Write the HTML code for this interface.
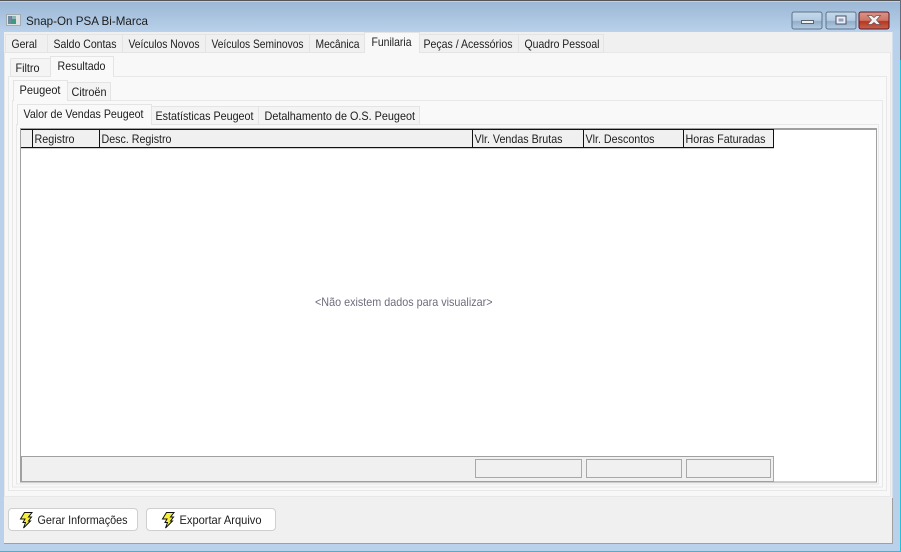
<!DOCTYPE html>
<html><head><meta charset="utf-8"><title>Snap-On PSA Bi-Marca</title>
<style>
html,body{margin:0;padding:0;background:#b9d1ea;overflow:hidden}
svg{display:block}
text{font-family:"Liberation Sans",sans-serif;font-size:12px;fill:#1c1c1c}
</style></head><body>
<svg width="901" height="552" viewBox="0 0 901 552" xmlns="http://www.w3.org/2000/svg">
<defs>
<linearGradient id="f" x1="0" y1="0" x2="0" y2="1"><stop offset="0" stop-color="#9ab6d4"/><stop offset="1" stop-color="#b9d1ea"/></linearGradient>
<linearGradient id="b" x1="0" y1="0" x2="0" y2="1"><stop offset="0" stop-color="#c6d9ec"/><stop offset=".5" stop-color="#b4cbe2"/><stop offset=".55" stop-color="#93adc8"/><stop offset="1" stop-color="#b4cde6"/></linearGradient>
<linearGradient id="c" x1="0" y1="0" x2="0" y2="1"><stop offset="0" stop-color="#d9968a"/><stop offset=".5" stop-color="#cf7463"/><stop offset=".55" stop-color="#b8351d"/><stop offset="1" stop-color="#c9634f"/></linearGradient>
</defs>
<rect width="901" height="552" fill="#b9d1ea"/>
<rect width="901" height="32" fill="url(#f)"/>
<rect width="901" height="1" fill="#555"/>
<rect y="1" width="901" height="1" fill="#c5d3e0"/>
<rect x="900" width="1" height="60" fill="#5f6f7f"/>
<rect x="900" y="60" width="1" height="492" fill="#1fc4dc"/>
<rect y="551" width="901" height="1" fill="#1fc4dc"/>
<!-- title icon -->
<rect x="6.5" y="14.5" width="14" height="11" fill="#dfe1e3" stroke="#a3abb2"/>
<rect x="8" y="16" width="8" height="8" fill="#3f9a84"/>
<rect x="8" y="16" width="3" height="8" fill="#6f8a9c"/>
<rect x="12" y="16" width="4" height="3" fill="#8fb4b8"/>
<text x="26" y="25" textLength="122" lengthAdjust="spacingAndGlyphs">Snap-On PSA Bi-Marca</text>
<!-- window buttons -->
<rect x="792" y="12" width="30" height="17" rx="2" fill="url(#b)" stroke="#5f7388"/>
<rect x="801.5" y="20.5" width="12" height="3" fill="#f0f0f0" stroke="#59636e"/>
<rect x="826" y="12" width="30" height="17" rx="2" fill="url(#b)" stroke="#5f7388"/>
<rect x="836" y="16" width="10" height="8" fill="#eef" stroke="#49525c"/>
<rect x="838.5" y="18.5" width="5" height="3" fill="#8da3b8" stroke="none"/>
<rect x="859" y="12" width="30" height="17" rx="2" fill="url(#c)" stroke="#5c1a28"/>
<path d="M867.5 15.5h4l2.5 2 2.5-2h4l-4 4.5 4 4.5h-4l-2.5-2-2.5 2h-4l4-4.5z" fill="#f2f2f2" stroke="#6a5050" stroke-width=".7"/>
<!-- client -->
<rect x="4" y="32" width="888.5" height="511.5" fill="#f0f0f0"/>
<rect x="892" y="498" width="1" height="46" fill="#a0a0a0"/>
<rect x="4" y="543" width="889" height="1" fill="#a0a0a0"/>
<!-- nested panels -->
<rect x="4.5" y="52.5" width="886" height="444" fill="#f8f8f8" stroke="#e8e8e8"/>
<rect x="8.5" y="76.5" width="878" height="414" fill="#f9f9f9" stroke="#e8e8e8"/>
<rect x="12.5" y="100.5" width="870" height="386.5" fill="#f9f9f9" stroke="#e8e8e8"/>
<rect x="16.5" y="124.5" width="862" height="359.5" fill="#f9f9f9" stroke="#e8e8e8"/>
<!-- row 1 tabs -->
<g fill="#f0f0f0" stroke="#e4e4e4">
<rect x="5.5" y="34.5" width="42" height="18"/>
<rect x="47.5" y="34.5" width="75" height="18"/>
<rect x="122.5" y="34.5" width="83" height="18"/>
<rect x="205.5" y="34.5" width="104" height="18"/>
<rect x="309.5" y="34.5" width="55" height="18"/>
<rect x="419.5" y="34.5" width="99" height="18"/>
<rect x="518.5" y="34.5" width="85" height="18"/>
<path d="M364.5 53V32.5H419.5V53" fill="#f8f8f8"/>
<!-- row 2 -->
<rect x="10.5" y="58.5" width="40" height="18" fill="#f4f4f4"/>
<path d="M50.5 77V56.5H113.5V77" fill="#f9f9f9"/>
<!-- row 3 -->
<path d="M13.5 101V80.5H67.5V101" fill="#f9f9f9"/>
<rect x="67.5" y="82.5" width="43" height="18" fill="#f4f4f4"/>
<!-- row 4 -->
<path d="M17.5 125V104.5H151.5V125" fill="#f9f9f9"/>
<rect x="151.5" y="106.5" width="107" height="18" fill="#f4f4f4"/>
<rect x="258.5" y="106.5" width="161" height="18" fill="#f4f4f4"/>
</g>
<rect x="365" y="51" width="54" height="3" fill="#f8f8f8"/>
<rect x="51" y="75" width="62" height="3" fill="#f9f9f9"/>
<rect x="14" y="99" width="53" height="3" fill="#f9f9f9"/>
<rect x="18" y="123" width="133" height="3" fill="#f9f9f9"/>
<text x="11.5" y="48" textLength="25.5" lengthAdjust="spacingAndGlyphs">Geral</text>
<text x="53.5" y="48" textLength="63" lengthAdjust="spacingAndGlyphs">Saldo Contas</text>
<text x="128.5" y="48" textLength="71" lengthAdjust="spacingAndGlyphs">Veículos Novos</text>
<text x="211.5" y="48" textLength="92" lengthAdjust="spacingAndGlyphs">Veículos Seminovos</text>
<text x="315.5" y="48" textLength="44" lengthAdjust="spacingAndGlyphs">Mecânica</text>
<text x="371.5" y="46" textLength="40" lengthAdjust="spacingAndGlyphs">Funilaria</text>
<text x="423.5" y="48" textLength="89" lengthAdjust="spacingAndGlyphs">Peças / Acessórios</text>
<text x="524.5" y="48" textLength="75" lengthAdjust="spacingAndGlyphs">Quadro Pessoal</text>
<text x="15.5" y="72" textLength="24" lengthAdjust="spacingAndGlyphs">Filtro</text>
<text x="57.5" y="70" textLength="48" lengthAdjust="spacingAndGlyphs">Resultado</text>
<text x="19.5" y="94" textLength="41" lengthAdjust="spacingAndGlyphs">Peugeot</text>
<text x="71.5" y="96" textLength="35" lengthAdjust="spacingAndGlyphs">Citroën</text>
<text x="23.5" y="118" textLength="120" lengthAdjust="spacingAndGlyphs">Valor de Vendas Peugeot</text>
<text x="155.5" y="120" textLength="98" lengthAdjust="spacingAndGlyphs">Estatísticas Peugeot</text>
<text x="264.5" y="120" textLength="150.5" lengthAdjust="spacingAndGlyphs">Detalhamento de O.S. Peugeot</text>
<!-- grid -->
<rect x="20.5" y="128.5" width="856" height="353.5" fill="#fff" stroke="#a0a0a0"/>
<rect x="21" y="129" width="855" height="1" fill="#a0a0a0"/>
<rect x="21" y="130" width="753" height="17" fill="#f0f0f0"/>
<rect x="21" y="147" width="753" height="1.2" fill="#111"/>
<g fill="#111">
<rect x="21" y="129" width="753" height="1"/>
<rect x="32" y="129" width="1" height="19"/>
<rect x="99" y="129" width="1" height="19"/>
<rect x="472" y="129" width="1" height="19"/>
<rect x="583" y="129" width="1" height="19"/>
<rect x="683" y="129" width="1" height="19"/>
<rect x="773" y="129" width="1" height="19"/>
</g>
<text x="34.5" y="143" textLength="40" lengthAdjust="spacingAndGlyphs">Registro</text>
<text x="101.5" y="143" textLength="70" lengthAdjust="spacingAndGlyphs">Desc. Registro</text>
<text x="474.5" y="143" textLength="88" lengthAdjust="spacingAndGlyphs">Vlr. Vendas Brutas</text>
<text x="585.5" y="143" textLength="69" lengthAdjust="spacingAndGlyphs">Vlr. Descontos</text>
<text x="685.5" y="143" textLength="80" lengthAdjust="spacingAndGlyphs">Horas Faturadas</text>
<text x="315" y="306" textLength="177.5" lengthAdjust="spacingAndGlyphs" style="fill:#6d6d7d">&lt;Não existem dados para visualizar&gt;</text>
<!-- grid footer -->
<rect x="21" y="456" width="753" height="26" fill="#a0a0a0"/>
<rect x="22" y="457" width="751" height="24" fill="#f0f0f0"/>
<rect x="773" y="457" width="1" height="24" fill="#a8a8a8"/>
<g fill="none" stroke="#a8a8a8">
<rect x="475.5" y="459.5" width="106" height="18"/>
<rect x="586.5" y="459.5" width="95" height="18"/>
<rect x="686.5" y="459.5" width="84" height="18"/>
</g>
<!-- buttons -->
<rect x="8.5" y="508.5" width="129" height="22" rx="3.5" fill="#fff" stroke="#cfcfcf"/>
<rect x="146.5" y="508.5" width="129" height="22" rx="3.5" fill="#fff" stroke="#cfcfcf"/>
<path d="M24.5 512.5H32L28.5 517H31.5L28.5 521H30.5L23.5 528L25.5 522.5H23L25 519H20.5Z" fill="#f6f03c" stroke="#111" stroke-width="1"/>
<path d="M166.5 512.5H174L170.5 517H173.5L170.5 521H172.5L165.5 528L167.5 522.5H165L167 519H162.5Z" fill="#f6f03c" stroke="#111" stroke-width="1"/>
<text x="37.5" y="524" textLength="90" lengthAdjust="spacingAndGlyphs">Gerar Informações</text>
<text x="179.5" y="524" textLength="82" lengthAdjust="spacingAndGlyphs">Exportar Arquivo</text>
</svg>
</body></html>
